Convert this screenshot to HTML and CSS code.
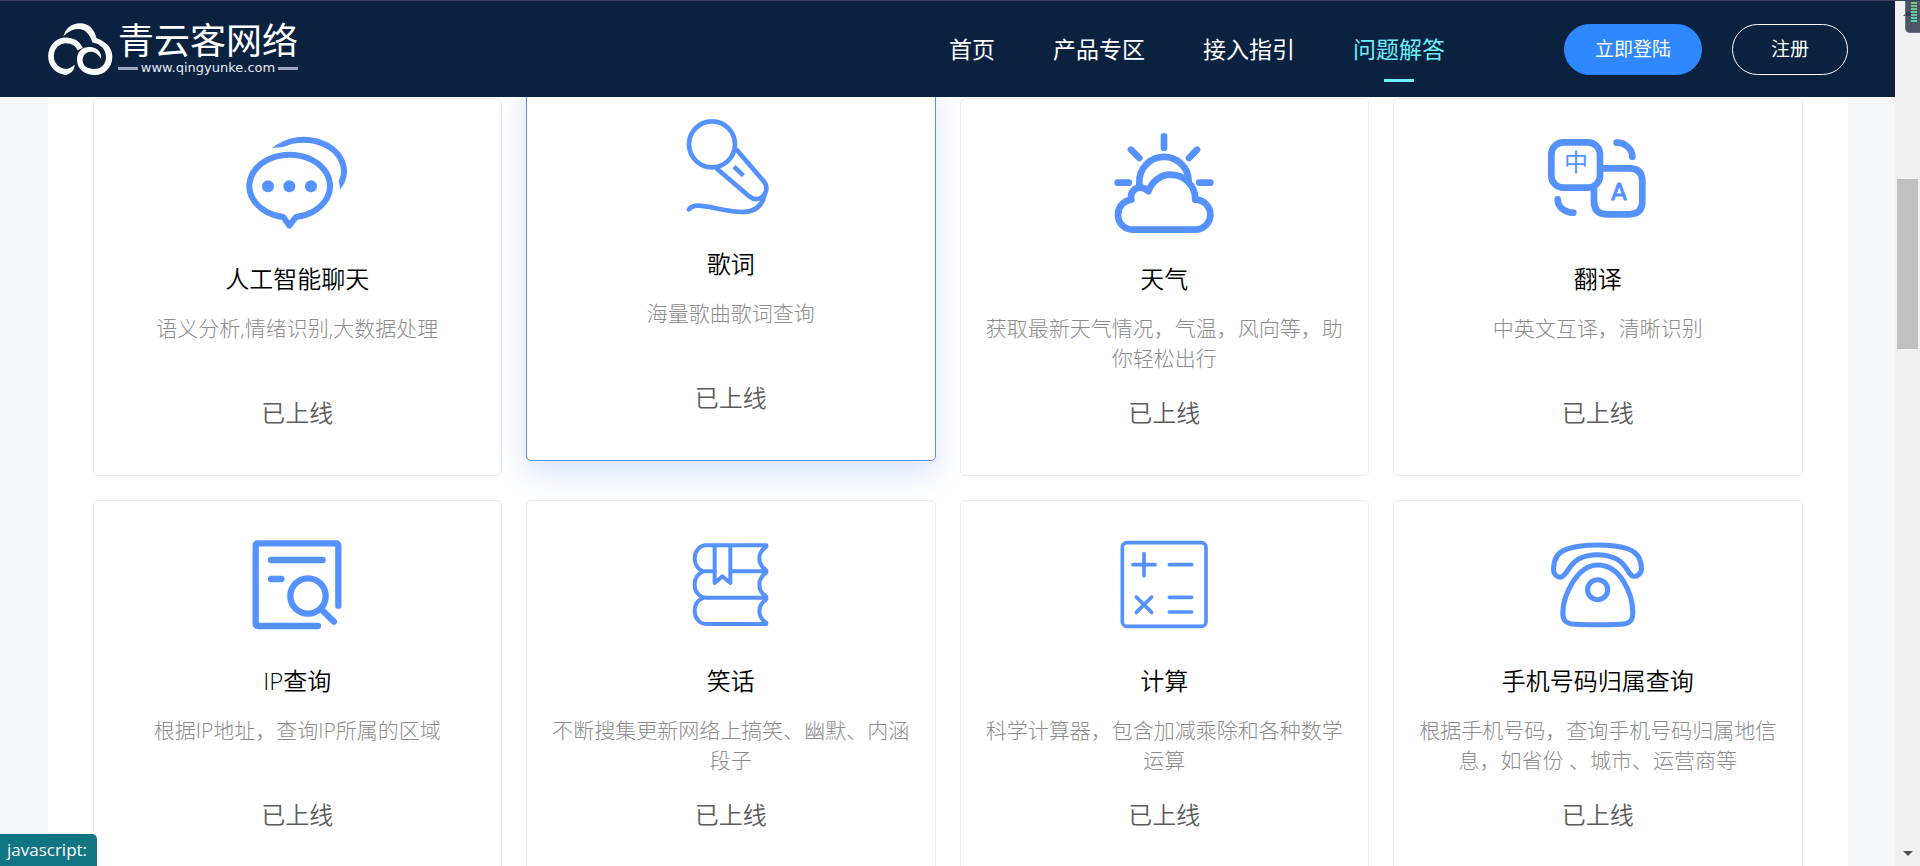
FILE: index.html
```html
<!DOCTYPE html>
<html lang="zh-CN">
<head>
<meta charset="utf-8">
<title>青云客网络</title>
<link rel="stylesheet" href="styles.css">
</head>
<body>
<div class="page">
  <header class="header">
    <a class="logo" href="#" aria-label="青云客网络">
      <svg class="logo-mark" viewBox="144 60 195 168" aria-hidden="true">
        <path fill="#fff" d="M190 106C197 82 215 67 240 67C268 67 285 88 289 111C318 122 337 140 337 167C337 200 313 222 285 222C255 222 231 205 231 177C231 150 247 138 268 138C292 138 306 155 303 173C295 160 285 152 272 152C257 152 248 163 248 178C248 195 262 204 282 204C303 204 318 190 318 168C318 145 303 130 277 124C270 100 255 84 236 84C218 84 204 92 190 106Z"/>
        <path fill="none" stroke="#fff" stroke-width="17" d="M241 144C232 126 216 118 198 118C171 118 153 140 153 166C153 192 173 212 200 212"/>
        <path fill="#fff" d="M168 208C178 216 188 222 199 222C215 216 224 206 224 191C213 201 204 204 192 204Z"/>
      </svg>
      <span class="logo-text">
        <span class="logo-name">青云客网络</span>
        <span class="logo-url">www.qingyunke.com</span>
      </span>
    </a>
    <nav class="nav">
      <a href="#">首页</a>
      <a href="#">产品专区</a>
      <a href="#">接入指引</a>
      <a href="#" class="active">问题解答</a>
    </nav>
    <div class="actions">
      <button class="btn btn-primary" type="button">立即登陆</button>
      <button class="btn btn-outline" type="button">注册</button>
    </div>
  </header>
  <main class="content">
    <section class="cards">
      <article class="card">
        <svg class="icon" viewBox="473 99 360 360" aria-hidden="true">
          <path stroke-width="18" stroke-linejoin="round" d="M612 381A121 94 0 1 1 650 381L630 407Z"/>
          <path class="fill" d="M578 174C610 150 640 140 672 140C745 140 803 186 803 243C803 262 796 283 783 298L778 271C784 262 785 252 785 243C785 196 735 158 672 158C650 158 630 162 612 171Z"/>
          <circle class="fill" cx="566" cy="289" r="18"/><circle class="fill" cx="630" cy="289" r="18"/><circle class="fill" cx="695" cy="289" r="18"/>
        </svg>
        <h3>人工智能聊天</h3>
        <p class="desc">语义分析,情绪识别,大数据处理</p>
        <p class="status">已上线</p>
      </article>
      <article class="card raised">
        <svg class="icon" viewBox="484 54 360 360" stroke-width="14" aria-hidden="true">
          <circle cx="607" cy="163" r="69"/>
          <path d="M679 177L764 276C776 292 770 315 752 324C742 329 730 328 720 320L620 235"/>
          <path stroke-linecap="round" d="M764 317C758 342 740 366 697 366C650 366 600 347 565 347C550 347 543 351 538 358"/>
          <path d="M673 230L701 257"/>
        </svg>
        <h3>歌词</h3>
        <p class="desc">海量歌曲歌词查询</p>
        <p class="status">已上线</p>
      </article>
      <article class="card">
        <svg class="icon round" viewBox="463 99 360 360" stroke-width="20" aria-hidden="true">
          <path d="M569 288V277A74 74 0 0 1 717 272"/>
          <path d="M545 329C540 306 556 293 572 293C582 293 590 297 596 304C607 275 632 254 662 254C704 254 737 287 737 329C762 329 782 350 782 374C782 398 762 419 737 419H549C524 419 505 399 505 374C505 350 522 332 545 329Z"/>
          <path d="M643 139V173M544 179L569 204M742 179L718 204M504 278H537M749 278H782"/>
        </svg>
        <h3>天气</h3>
        <p class="desc">获取最新天气情况，气温，风向等，助你轻松出行</p>
        <p class="status">已上线</p>
      </article>
      <article class="card">
        <svg class="icon round" viewBox="475 99 360 360" stroke-width="20" aria-hidden="true">
          <rect x="515" y="157" width="146" height="136" rx="36"/>
          <path d="M668 235H749Q788 235 788 274V334Q788 373 749 373H681Q643 373 643 334V298"/>
          <path d="M711 158C738 158 758 178 758 200M534 328C534 350 554 368 581 368"/>
          <text class="icon-han" x="589" y="242">中</text>
          <text class="icon-latin" x="718" y="330">A</text>
        </svg>
        <h3>翻译</h3>
        <p class="desc">中英文互译，清晰识别</p>
        <p class="status">已上线</p>
      </article>
      <article class="card">
        <svg class="icon round" viewBox="712 105 360 360" stroke-width="19" aria-hidden="true">
          <path d="M1016 347V168Q1016 160 1008 160H776Q768 160 768 168V400Q768 408 776 408H955"/>
          <path d="M814 210H969M814 267H845M967 360L1003 395"/>
          <circle cx="925" cy="318" r="53"/>
        </svg>
        <h3>IP查询</h3>
        <p class="desc">根据IP地址，查询IP所属的区域</p>
        <p class="status">已上线</p>
      </article>
      <article class="card">
        <svg class="icon round" viewBox="484 105 360 360" stroke-width="12" aria-hidden="true">
          <path d="M770 166H590C569 166 555 184 555 205C555 226 569 244 590 244H615M665 244H770"/>
          <path d="M580 245C563 252 555 266 555 284C555 305 569 323 590 323H770"/>
          <path d="M580 324C563 331 555 345 555 362C555 384 569 402 590 402H770"/>
          <path d="M770 170C742 188 742 222 770 241M770 248C742 266 742 302 770 320M770 328C742 346 742 380 770 399"/>
          <path d="M615 168V279L638 259L662 279V168"/>
        </svg>
        <h3>笑话</h3>
        <p class="desc">不断搜集更新网络上搞笑、幽默、内涵段子</p>
        <p class="status">已上线</p>
      </article>
      <article class="card">
        <svg class="icon round" viewBox="463 105 360 360" stroke-width="11" aria-hidden="true">
          <rect x="518" y="158" width="251" height="251" rx="14"/>
          <path d="M583 191V257M550 224H616M659 224H726M560 321L606 367M606 321L560 367M659 322H726M659 366H726"/>
        </svg>
        <h3>计算</h3>
        <p class="desc">科学计算器，包含加减乘除和各种数学运算</p>
        <p class="status">已上线</p>
      </article>
      <article class="card">
        <svg class="icon round" viewBox="460 105 348 360" preserveAspectRatio="none" stroke-width="15" aria-hidden="true">
          <path d="M505 240C505 205 520 185 545 177C590 161 676 161 722 177C746 186 760 208 760 238C760 250 746 263 734 258C720 250 717 224 690 208C655 190 610 190 576 208C548 226 544 255 528 261C514 264 505 250 505 240Z"/>
          <path d="M633 225C700 225 735 312 735 370C735 393 725 399 712 401C680 405 585 405 553 401C540 398 532 392 532 370C532 315 575 225 633 225Z"/>
          <ellipse cx="633" cy="299" rx="29" ry="30"/>
        </svg>
        <h3>手机号码归属查询</h3>
        <p class="desc">根据手机号码，查询手机号码归属地信息，如省份 、城市、运营商等</p>
        <p class="status">已上线</p>
      </article>
    </section>
  </main>
</div>
<div class="scrollbar" aria-hidden="true">
  <span class="arrow arrow-up"></span>
  <span class="thumb"></span>
  <span class="arrow arrow-down"></span>
</div>
<div class="meter" aria-hidden="true"></div>
<div class="status-tip">javascript:</div>
</body>
</html>
```

FILE: styles.css
```css
* { box-sizing: border-box; }

body {
  margin: 0;
  height: 100vh;
  display: flex;
  overflow: hidden;
  position: relative;
  border-top: 1px solid #3b4263;
  background: #f7f8fa;
  color: #000;
  font-family: "Open Sans", "Noto Sans CJK SC", sans-serif;
}

h3, p { margin: 0; font-weight: 400; }
a { color: inherit; text-decoration: none; }

.page {
  flex: 1;
  min-width: 0;
  display: flex;
  flex-direction: column;
}

.header {
  flex: none;
  height: 96px;
  padding: 0 47px 0 48px;
  display: flex;
  align-items: center;
  position: relative;
  z-index: 2;
  background: #0b2140;
  color: #fff;
}

.logo { display: flex; align-items: center; gap: 5px; }
.logo-mark { width: 65px; height: 56px; }
.logo-text { display: flex; flex-direction: column; }
.logo-name {
  font-size: 36px;
  line-height: 38px;
}
.logo-url {
  display: flex;
  align-items: center;
  gap: 3px;
  font: 13px/16px "DejaVu Sans", sans-serif;
  color: #e6eaf0;
}
.logo-url::before, .logo-url::after {
  content: "";
  flex: 1;
  height: 3px;
  background: #9aa5b6;
}

.nav {
  margin-left: auto;
  display: flex;
  gap: 58px;
  font-size: 23px;
  line-height: 96px;
}
.nav .active { position: relative; color: #6cf0ff; }
.nav .active::after {
  content: "";
  position: absolute;
  left: 50%;
  bottom: 15px;
  width: 30px;
  height: 3px;
  margin-left: -15px;
  background: #6cf0ff;
}

.actions { display: flex; gap: 30px; margin-left: 119px; }
.btn {
  height: 51px;
  padding: 0 30px;
  border: 1px solid #2f88ff;
  border-radius: 26px;
  background: #2f88ff;
  color: #fff;
  font: inherit;
  font-size: 19px;
  line-height: 48px;
}
.btn-outline { padding: 0 38px; border-color: #fff; background: transparent; }

.content {
  flex: 1;
  min-height: 0;
  width: 100%;
  max-width: 1800px;
  margin: 0 auto;
  padding: 1px 45px 0;
  background: #fff;
}

.cards {
  display: grid;
  grid-template-columns: repeat(4, 1fr);
  gap: 24px;
}

.card {
  display: flex;
  flex-direction: column;
  align-items: center;
  padding: 24px 24px 44px;
  border: 1px solid #e9ebee;
  border-radius: 5px;
  background: #fff;
  text-align: center;
}
.card.raised {
  transform: translateY(-15px);
  border-color: #5591ff;
  box-shadow: 0 12px 30px rgba(75, 125, 245, 0.22);
}

.icon {
  width: 120px;
  height: 120px;
  fill: none;
  stroke: #5591ff;
}
.icon.round { stroke-linecap: round; stroke-linejoin: round; }
.icon .fill, .icon text { fill: #5591ff; stroke: none; }
.icon text { text-anchor: middle; }
.icon-han { font-size: 72px; }
.icon .icon-latin {
  font-family: "DejaVu Sans", sans-serif;
  font-size: 68px;
  stroke: #5591ff;
  stroke-width: 3px;
}

.card h3 { margin-top: 18px; font-size: 24px; line-height: 36px; font-weight: 350; }
.desc {
  min-height: 60px;
  margin-top: 16px;
  font-size: 21px;
  line-height: 30px;
  font-weight: 300;
  color: #8c8c8c;
}
.status { margin-top: 22px; font-size: 24px; line-height: 36px; font-weight: 350; color: #5c5c5c; }

.scrollbar {
  flex: none;
  width: 25px;
  padding: 10px 0;
  display: flex;
  flex-direction: column;
  align-items: center;
  background: #f1f1f1;
}
.arrow { border: 5px solid transparent; }
.arrow-up { border-top: 0; border-bottom-color: #505050; }
.arrow-down { border-bottom: 0; border-top-color: #505050; margin-top: auto; }
.thumb { width: 21px; height: 170px; margin-top: 163px; background: #c1c1c1; }

.meter {
  position: absolute;
  top: -1px;
  right: 0;
  z-index: 3;
  width: 15px;
  height: 33px;
  border: 1px solid #6a7180;
  border-width: 0 0 1px 1px;
  border-radius: 0 0 0 5px;
  background: rgba(50, 58, 76, 0.86);
}
.meter::before {
  content: "";
  position: absolute;
  left: 5px;
  top: 1px;
  width: 6px;
  height: 21px;
  background:
    repeating-linear-gradient(#4b5263 0 1px, transparent 1px 3px),
    linear-gradient(#7cc07a, #4fd6b8);
}

.status-tip {
  position: absolute;
  left: 0;
  bottom: 0;
  z-index: 3;
  padding: 0 10px 0 7px;
  border-radius: 0 5px 0 0;
  background: #0e7581;
  color: #fff;
  font-size: 17px;
  line-height: 32px;
}
```
